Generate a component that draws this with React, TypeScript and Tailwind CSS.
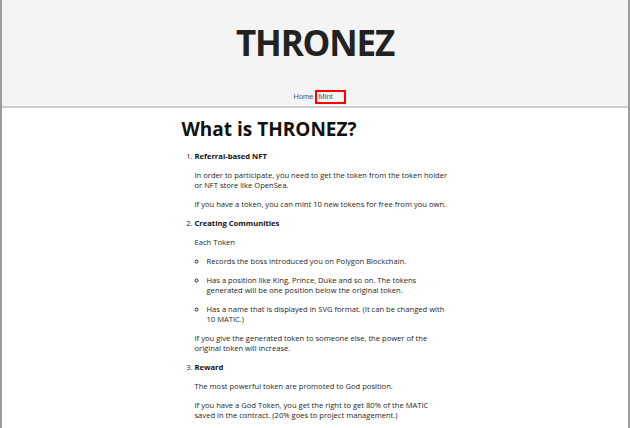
export default function App() {
  return (
    <div className="min-h-screen bg-white border-x-2 border-[#9c9c9c] font-['Open_Sans',sans-serif]">
      {/* Header */}
      <header className="h-[108px] bg-[#f4f4f4] border-b-2 border-[#cdcdcd] flex flex-col items-center">
        <h1 className="mt-[25px] text-[35px] leading-none font-bold tracking-[-1.2px] text-[#222]">THRONEZ</h1>
        <nav className="mt-auto mb-[2px] flex items-center pl-[9px] font-['Liberation_Sans',Arial,sans-serif] text-[7.5px] text-[#555]">
          <a className="pr-px">Home</a>
          <a className="w-[31px] h-[14px] border-2 border-[#ff0000] flex items-center px-[2px]">Mint</a>
        </nav>
      </header>

      {/* Content */}
      <main className="w-[267px] mx-auto text-[7.6px] leading-[10px] text-[#262626]">
        <h2 className="mt-[9px] text-[19px] leading-[24px] font-bold text-[#111]">What is THRONEZ?</h2>

        <ol className="list-decimal pl-[13px] mt-[10px]">
          <li>
            <strong className="text-[#111]">Referral-based NFT</strong>
            <p className="mt-[9px]">
              In order to participate, you need to get the token from the token holder or NFT store like OpenSea.
            </p>
            <p className="mt-[9px]">If you have a token, you can mint 10 new tokens for free from you own.</p>
          </li>
          <li className="mt-[9px]">
            <strong className="text-[#111]">Creating Communities</strong>
            <p className="mt-[9px]">Each Token</p>
            <ul className="list-[circle] pl-[12px]">
              <li className="mt-[9px]">Records the boss introduced you on Polygon Blockchain.</li>
              <li className="mt-[9px]">
                Has a position like King, Prince, Duke and so on. The tokens generated will be one position below the
                original token.
              </li>
              <li className="mt-[9px]">
                Has a name that is displayed in SVG format. (It can be changed with 10 MATIC.)
              </li>
            </ul>
            <p className="mt-[9px]">
              If you give the generated token to someone else, the power of the original token will increase.
            </p>
          </li>
          <li className="mt-[9px]">
            <strong className="text-[#111]">Reward</strong>
            <p className="mt-[9px]">The most powerful token are promoted to God position.</p>
            <p className="mt-[9px]">
              If you have a God Token, you get the right to get 80% of the MATIC saved in the contract. (20% goes to
              project management.)
            </p>
          </li>
        </ol>
      </main>
    </div>
  );
}
